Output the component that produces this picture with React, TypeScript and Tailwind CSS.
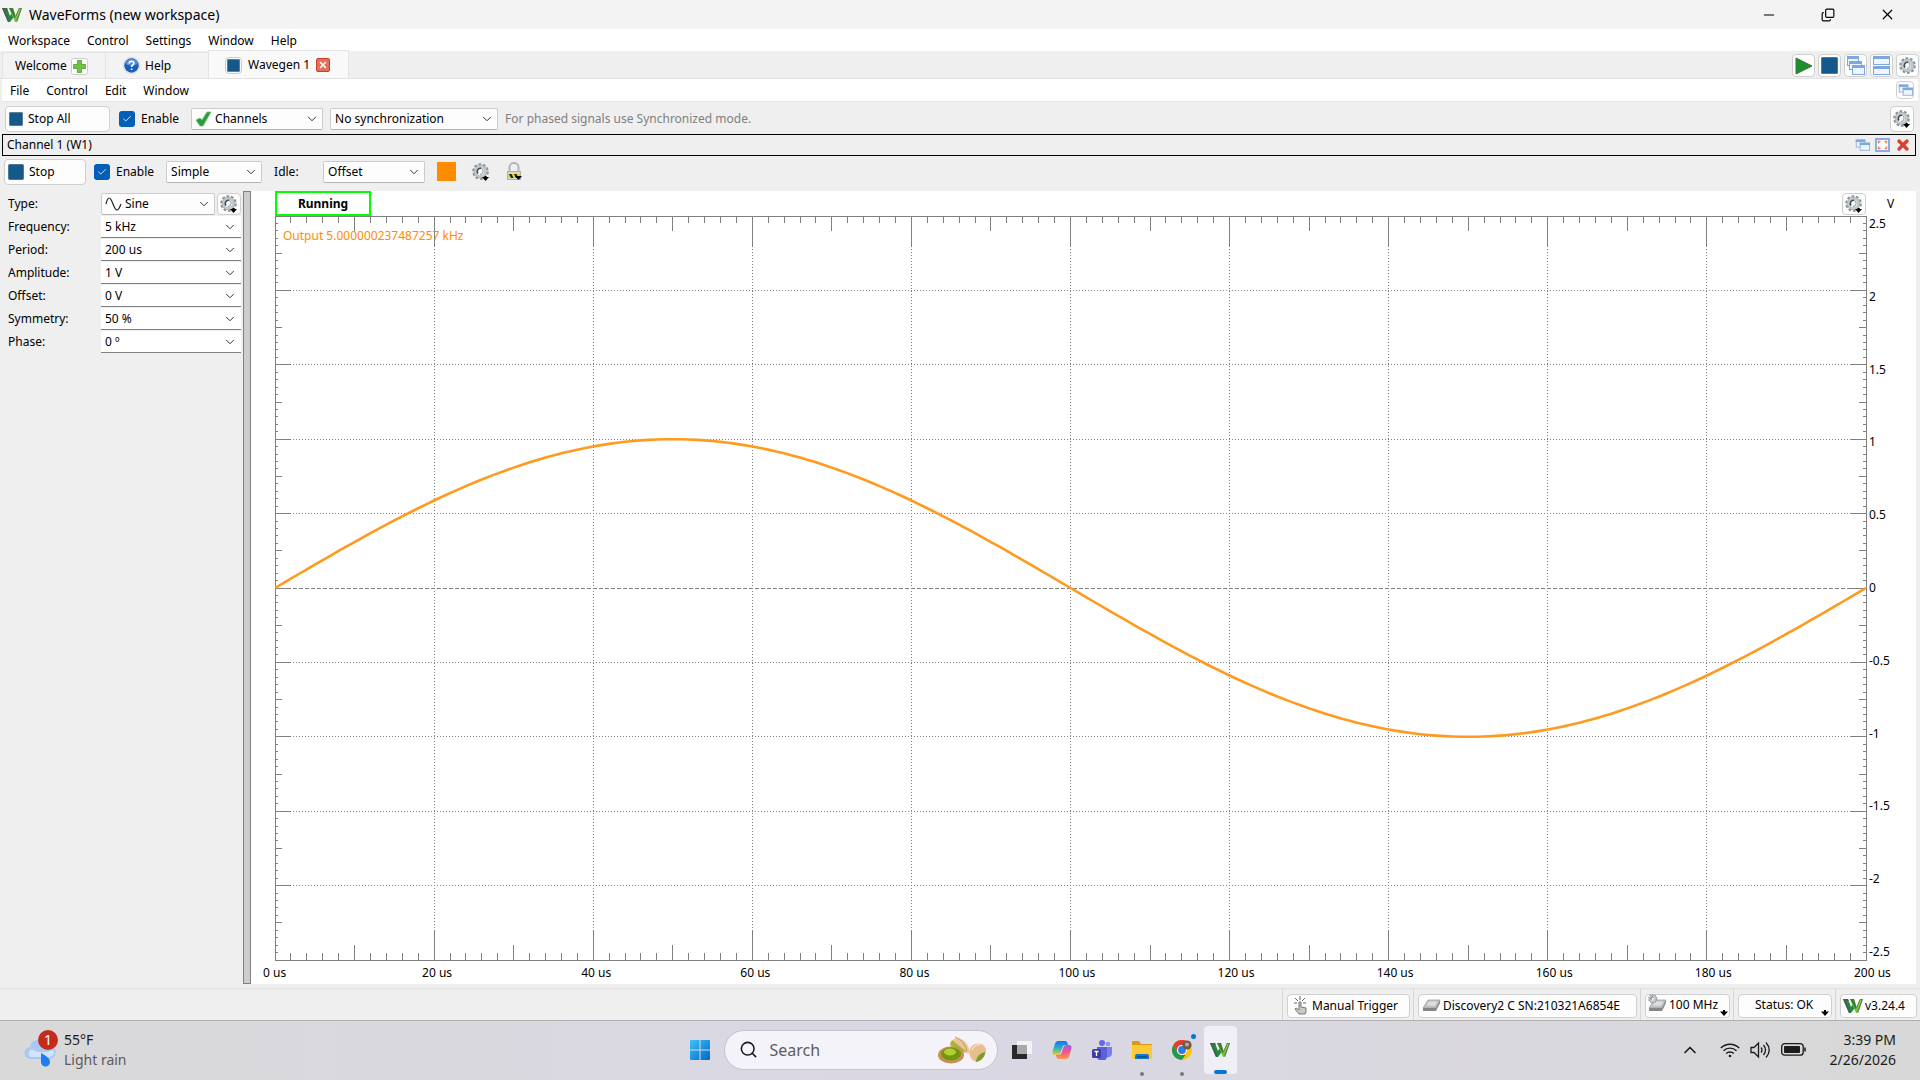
import React from 'react';
import { ChevronDown, ChevronUp, Search, Minus, X, Copy, Check } from 'lucide-react';

const Gear = ({ size = 18, menu = false }: { size?: number; menu?: boolean }) => (
  <svg width={size} height={size} viewBox="0 0 18 18" aria-hidden="true">
    <circle cx="8.5" cy="8.5" r="7" fill="none" stroke="#8b9295" strokeWidth="2.6" strokeDasharray="2.7 1.7" />
    <circle cx="8.5" cy="8.5" r="5" fill="#fafafa" stroke="#c3c8ca" strokeWidth="3" />
    <circle cx="8.5" cy="8.5" r="6.3" fill="none" stroke="#a4abae" strokeWidth="0.7" />
    <path d="M6 10.5A3.2 3.2 0 0 1 9 5.3" fill="none" stroke="#3b4b58" strokeWidth="1.6" />
    <path d="M9 5.3a3.2 3.2 0 0 1-1 6.2" fill="none" stroke="#8a979f" strokeWidth="1" />
    {menu && <path d="M10 14h7l-3.500 4zM12.500 13h2v2h-2z" fill="#000" />}
  </svg>
);

const Logo = () => (
  <svg width="20" height="16" viewBox="0 1 20 18" preserveAspectRatio="none" aria-hidden="true">
    <path d="M0 2h5l3 9 1.500-3 2.500 4-4 6H6z" fill="#1f8a42" />
    <path d="M0 2h5l.8 2.200H2.500L7 16l-1 2z" fill="#4a5b50" />
    <path d="M7 2h4l2.500 9L17 2h3l-5 16h-2z" fill="#7fbf3f" />
    <path d="M7 2h4l2.500 9-.8 3z" fill="#3f7d35" />
    <path d="M13.500 11 17 2h3l-5 16z" fill="#5d7f4e" />
    <path d="M14 12.500 17.500 3h1.200l-4.200 12z" fill="#8fd04a" />
  </svg>
);

const Square = ({ size = 14 }: { size?: number }) => (
  <svg width={size} height={size} viewBox="0 0 16 16" aria-hidden="true">
    <rect x=".5" y=".5" width="15" height="15" rx="1" fill="#14598a" stroke="#4d7896" />
  </svg>
);

const Cascade = ({ size = 19, three = false }: { size?: number; three?: boolean }) => (
  <svg width={size} height={size} viewBox="0 0 19 19" aria-hidden="true">
    <g fill="#eef5fe" stroke="#7da7dd">
      <rect x="1.500" y={three ? 0.5 : 2.5} width="11" height="9" />
      {three && <rect x="3.500" y="5.500" width="12" height="8" />}
      <rect x="6.500" y={three ? 9.5 : 6.5} width="12" height="9" />
    </g>
    <g fill="#7da7dd">
      <rect x="1" y={three ? 0 : 2} width="12" height="3" />
      {three && <rect x="3" y="5" width="13" height="3" />}
      <rect x="6" y={three ? 9 : 6} width="13" height="3" />
    </g>
  </svg>
);

const Tile = () => (
  <svg width="17" height="19" viewBox="0 0 17 19" aria-hidden="true">
    <g fill="#eef5fe" stroke="#7da7dd">
      <rect x=".5" y=".5" width="16" height="8" />
      <rect x=".5" y="10.500" width="16" height="8" />
    </g>
    <path d="M0 0h17v3H0zM0 10h17v3H0z" fill="#7da7dd" />
  </svg>
);

const Caret = () => (
  <svg className="self-end" width="8" height="6" viewBox="0 0 8 6" aria-hidden="true">
    <path d="M3 0h2v1.500h3L4 6 0 1.500h3z" fill="#000" />
  </svg>
);

const Device = () => (
  <svg width="19" height="15" viewBox="0 0 19 15" aria-hidden="true">
    <path d="M6 2h12l-4 8H1z" fill="#c4c4c4" stroke="#999" strokeWidth=".7" />
    <path d="M1 10h13l4-8v3l-4 8H1z" fill="#858585" />
    <path d="M7 3.500h8l-2 4H5z" fill="#dedede" />
  </svg>
);

type BtnProps = { label?: string; className: string; children: React.ReactNode };
const Btn = ({ label, className, children }: BtnProps) => (
  <button
    type="button"
    aria-label={label}
    className={`flex shrink-0 items-center rounded border border-[#cfcfcf] bg-[#fdfdfd] whitespace-nowrap ${className}`}
  >
    {children}
  </button>
);

type DropProps = { label?: string; id?: string; value: string; className: string; pad?: string; flat?: boolean; icon?: React.ReactNode };
const Drop = ({ label, id, value, className, pad = 'pl-1', flat, icon }: DropProps) => (
  <div className={`relative flex h-[22px] items-center ${className}`}>
    <select
      id={id}
      aria-label={label}
      defaultValue={value}
      className={`h-full w-full appearance-none outline-none ${pad} ${
        flat ? 'border-b border-[#808080] bg-white' : 'rounded-xs border border-[#cccccc] border-b-[#b4b4b4] bg-[#fdfdfd]'
      }`}
    >
      <option>{value}</option>
    </select>
    {icon && <span className="pointer-events-none absolute left-1">{icon}</span>}
    <ChevronDown size={14} strokeWidth={1.7} className="pointer-events-none absolute right-1 text-[#333]" />
  </div>
);

const Tick = ({ id }: { id: string }) => (
  <label htmlFor={id} className="flex items-center gap-1.5">
    <span className="relative flex size-4 items-center justify-center">
      <input id={id} type="checkbox" defaultChecked className="size-4 appearance-none rounded-[3px] bg-[#005fb8]" />
      <Check size={10} strokeWidth={2} className="pointer-events-none absolute text-white" />
    </span>
    Enable
  </label>
);

const Menu = ({ items, className }: { items: string[]; className: string }) => (
  <nav className={`flex items-center gap-[17px] bg-white pt-0.5 ${className}`}>
    {items.map((item) => (
      <button type="button" key={item}>{item}</button>
    ))}
  </nav>
);

const Cell = ({ children }: { children: React.ReactNode }) => (
  <div className="flex h-full items-center border-l border-[#d5d5d5] pt-0.5 pr-[3px] pl-1">{children}</div>
);

const FIELDS = [
  ['Frequency', '5 kHz'],
  ['Period', '200 us'],
  ['Amplitude', '1 V'],
  ['Offset', '0 V'],
  ['Symmetry', '50 %'],
  ['Phase', '0 º'],
];
const VOLTS = ['2.5', '2', '1.5', '1', '0.5', '0', '-0.5', '-1', '-1.5', '-2', '-2.5'];
const TIMES = [0, 20, 40, 60, 80, 100, 120, 140, 160, 180, 200];

const wave = Array.from({ length: 201 }, (_, i) => `${i},${(50 - 20 * Math.sin((i / 100) * Math.PI)).toFixed(3)}`).join(' ');

const Plot = () => (
  <svg className="absolute inset-0 h-full w-full overflow-visible" role="img" aria-label="Sine output">
    <g stroke="#808080" strokeWidth="1" fill="none" shapeRendering="crispEdges">
      <rect width="100%" height="100%" />
      {Array.from({ length: 99 }, (_, i) => i + 1).map((i) => {
        const x = `${i}%`;
        const len = i % 10 === 0 ? 30 : i % 5 === 0 ? 15 : 7;
        return (
          <g key={i}>
            {i % 10 === 0 && <line x1={x} x2={x} y1="0" y2="100%" strokeDasharray="1 2" />}
            <line x1={x} x2={x} y1="0" y2={len} />
            <svg y="100%" overflow="visible">
              <line x1={x} x2={x} y1="0" y2={-len} />
            </svg>
          </g>
        );
      })}
      {Array.from({ length: 99 }, (_, i) => i + 1).map((i) => {
        const y = `${i}%`;
        const len = i % 10 === 0 ? 15 : i % 5 === 0 ? 7 : 3;
        return (
          <g key={i}>
            {i % 10 === 0 && <line x1="0" x2="100%" y1={y} y2={y} strokeDasharray={i === 50 ? '4 2' : '1 2'} />}
            <line x1="0" x2={len} y1={y} y2={y} />
            <svg x="100%" overflow="visible">
              <line x1="0" x2={-len} y1={y} y2={y} />
            </svg>
          </g>
        );
      })}
    </g>
    <svg width="100%" height="100%" viewBox="0 0 200 100" preserveAspectRatio="none">
      <polyline points={wave} fill="none" stroke="#ff9a1f" strokeWidth="2.6" vectorEffect="non-scaling-stroke" />
    </svg>
  </svg>
);

const Taskbar = () => (
  <footer className="grid h-[60px] shrink-0 grid-cols-[1fr_auto_1fr] border-t border-[#b0b0b0] bg-linear-to-r from-[#d9d9d9] via-[#dad7e4] to-[#d8d8d8] pb-0.5 text-sm leading-5 text-[#1b1b1b]">
    <button type="button" className="flex items-center gap-2 pl-6 text-left">
      <span className="relative">
        <svg width="32" height="36" viewBox="0 0 32 36" aria-hidden="true">
          <path d="M7 27a6 6 0 0 1-1-12 9 9 0 0 1 17-2 7 7 0 0 1 3 14z" fill="#a9c9f2" />
          <path d="M6 25a5 5 0 0 1 2-8c3 4 16 4 21 1 2 4 0 7-4 7z" fill="#d3e3fa" />
          <path d="M17 21c5 3 9 5 9 9a4.500 4.500 0 0 1-9 0z" fill="#1f7cf2" />
        </svg>
        <span className="absolute -top-0.5 left-3.5 flex size-5 items-center justify-center rounded-full bg-[#c42b1c] text-white">1</span>
      </span>
      <span>
        <span className="block">55°F</span>
        <span className="block text-[#5b5b5b]">Light rain</span>
      </span>
    </button>
    <div className="flex items-center pl-1.5">
      <button type="button" aria-label="Start" className="mr-3.5">
        <svg width="20" height="20" viewBox="0 0 20 20" aria-hidden="true">
          <defs>
            <linearGradient id="win" x1="0" y1="0" x2="1" y2="1"><stop stopColor="#3dc3f7" /><stop offset="1" stopColor="#0067c6" /></linearGradient>
          </defs>
          <path d="M0 1q0-1 1-1h8.500v9.500H0zM10.500 0H19q1 0 1 1v8.500h-9.500zM0 10.500h9.500V20H1q-1 0-1-1zM10.500 10.500H20V19q0 1-1 1h-8.500z" fill="url(#win)" />
        </svg>
      </button>
      <label className="flex h-10 w-[274px] items-center gap-3 rounded-full border border-[#c5c2cf] bg-[#f4f3f9] pr-2.5 pl-3.5">
        <Search size={19} strokeWidth={2} className="shrink-0 text-[#1b1b1b]" />
        <input aria-label="Search" placeholder="Search" className="w-0 flex-1 bg-transparent text-base outline-none placeholder:text-[#5c5c5c]" />
        <svg width="50" height="30" viewBox="0 0 50 30" aria-hidden="true">
          <path d="M13 11C14-1 31 1 33 18c-6 1-14-2-20-7z" fill="#eac698" />
          <path d="M15 5c5 4 10 8 15 12-7-1-14-4-17-8z" fill="#a8b437" />
          <path d="M18 2q9 3 12 14" fill="none" stroke="#c79361" />
          <ellipse cx="14" cy="20" rx="13" ry="8.500" fill="#c88f55" />
          <ellipse cx="14" cy="19" rx="10" ry="6.500" fill="#719711" />
          <ellipse cx="13" cy="17" rx="6" ry="3.500" fill="#b2cf31" />
          <path d="M33 14c4-9 17-6 16 3-1 5-5 9-10 10-5-2-8-7-6-13z" fill="#e7be8d" />
          <path d="M48 17c-5 1-9 5-9 10 5-1 9-5 9-10z" fill="#7d9b27" />
          <path d="M35 15q3-6 8-5" fill="none" stroke="#f6dfbd" strokeWidth="1.500" />
        </svg>
      </label>
      <div className="ml-3.5 flex items-center gap-5">
        <button type="button" aria-label="Task view">
          <svg width="20" height="20" viewBox="0 0 20 20" aria-hidden="true">
            <path d="M0 5h15v14H0z" fill="#292929" />
            <path d="M5 1h15v13H5z" fill="#f3f3f3" />
            <path d="M5 5h10v9H5z" fill="#a9a9a9" />
          </svg>
        </button>
        <button type="button" aria-label="Copilot">
          <svg width="20" height="20" viewBox="0 0 20 20" aria-hidden="true">
            <defs>
              <linearGradient id="cpA" x1="0" y1="0" x2="0" y2="1"><stop stopColor="#1f6fe0" /><stop offset=".5" stopColor="#27b4c8" /><stop offset="1" stopColor="#f2c82f" /></linearGradient>
              <linearGradient id="cpB" x1="0" y1="0" x2="0" y2="1"><stop stopColor="#a45be8" /><stop offset=".5" stopColor="#f0568c" /><stop offset="1" stopColor="#fb9a4b" /></linearGradient>
            </defs>
            <path d="M6 1h7q2 0 2.500 2l.5 2h-3q-2 0-2.500 2l-2 6q-.5 2-3 2H3q-3 0-2.500-3.500L3 3.500Q4 1 6 1z" fill="url(#cpA)" />
            <path d="M14 19H7q-2 0-2.500-2L4 15h3q2 0 2.500-2l2-6q.5-2 3-2H17q3 0 2.500 3.500L17 16.500Q16 19 14 19z" fill="url(#cpB)" />
          </svg>
        </button>
        <button type="button" aria-label="Teams">
          <svg width="20" height="20" viewBox="0 0 20 20" aria-hidden="true">
            <circle cx="10" cy="3" r="3" fill="#6269e2" />
            <circle cx="16" cy="4" r="2.300" fill="#8f93f0" />
            <path d="M13 7h7v7a4 4 0 0 1-7 2z" fill="#7a7fee" />
            <path d="M5 7h10v8a5 5 0 0 1-10 2z" fill="#5b5fd9" />
            <rect x="0" y="9" width="9" height="9" rx="1.500" fill="#3b3dad" />
            <path d="M2.500 11.500h4M4.500 11.500v4.500" stroke="#fff" strokeWidth="1.300" />
          </svg>
        </button>
        <button type="button" aria-label="File Explorer" className="relative">
          <svg width="20" height="20" viewBox="0 0 20 20" aria-hidden="true">
            <path d="M0 2q0-1 1-1h6l2 3h10q1 0 1 1v4H0z" fill="#dd9a0c" />
            <path d="M0 5h20v13q0 1-1 1H1q-1 0-1-1z" fill="#fdc939" />
            <path d="M3 19v-3q0-2 2-2h10q2 0 2 2v3z" fill="#1277cf" />
            <path d="M5 16h10v1.500H5z" fill="#0b4f96" />
          </svg>
          <span className="absolute -bottom-4 left-2 size-1 rounded-full bg-[#7a7a7a]" />
        </button>
        <button type="button" aria-label="Chrome" className="relative">
          <svg width="20" height="20" viewBox="0 0 20 20" aria-hidden="true">
            <circle cx="10" cy="10" r="10" fill="#fbc116" />
            <path d="M1.300 5A10 10 0 0 1 18.700 5H10a5 5 0 0 0-4.500 7.300z" fill="#e33b2e" />
            <path d="M1.300 5l4.300 7.500A5 5 0 0 0 10 15h3.500L9.800 20A10 10 0 0 1 1.300 5z" fill="#229a4b" />
            <circle cx="10" cy="10" r="5" fill="#fff" />
            <circle cx="10" cy="10" r="3.900" fill="#2a7de9" />
            <circle cx="15" cy="5" r="4.600" fill="#6e5a54" />
            <circle cx="15" cy="4.500" r="2" fill="#d0a58e" />
          </svg>
          <span className="absolute -top-1.5 -right-1 size-[5px] rounded-full bg-[#0078d4]" />
          <span className="absolute -bottom-4 left-2 size-1 rounded-full bg-[#7a7a7a]" />
        </button>
      </div>
      <button type="button" aria-label="WaveForms" className="relative ml-3 flex h-12 w-[33px] items-center justify-center rounded bg-[#f0eff5]">
        <Logo />
        <span className="absolute bottom-0 h-1 w-[13px] rounded-full bg-[#0078d4]" />
      </button>
    </div>
    <div className="flex items-center justify-end pr-6">
      <ChevronUp size={20} strokeWidth={2} className="mr-5" />
      <svg width="20" height="16" viewBox="0 0 20 16" aria-hidden="true" fill="none" stroke="#1b1b1b" strokeWidth="1.400">
        <path d="M.8 6a13 13 0 0 1 18.400 0M3.500 8.800a9.200 9.200 0 0 1 13 0M6.200 11.500a5.400 5.400 0 0 1 7.600 0" />
        <circle cx="10" cy="14" r="1.300" fill="#1b1b1b" stroke="none" />
      </svg>
      <svg className="ml-2.5" width="21" height="18" viewBox="0 0 21 18" aria-hidden="true" fill="none" stroke="#1b1b1b" strokeWidth="1.300">
        <path d="M1 6.500h3L8.500 2v14L4 11.500H1zM11 6.500q2 2.500 0 5M13.500 4q4 5 0 10M16 1.500q6.500 7.500 0 15" />
      </svg>
      <svg className="ml-2.5" width="25" height="13" viewBox="0 0 25 13" aria-hidden="true">
        <rect x=".7" y=".7" width="21.500" height="11.500" rx="3" fill="none" stroke="#1b1b1b" strokeWidth="1.300" />
        <rect x="3" y="3" width="16" height="7" rx="1" fill="#1b1b1b" />
        <path d="M24 4.500v4" stroke="#1b1b1b" strokeWidth="1.500" />
      </svg>
      <div className="ml-6 text-right">
        <div>3:39 PM</div>
        <div>2/26/2026</div>
      </div>
    </div>
  </footer>
);

export default function App() {
  return (
    <div className="flex h-screen flex-col overflow-hidden bg-[#efefef] font-['Noto_Sans',sans-serif] text-xs text-black">
      <header className="flex h-[29px] shrink-0 items-center bg-[#f3f3f3] pl-0.5 text-sm">
        <Logo />
        <h1 className="ml-[7px] flex-1">WaveForms (new workspace)</h1>
        <div className="flex gap-11 pr-6">
          <button type="button" aria-label="Minimize"><Minus size={16} strokeWidth={1.7} /></button>
          <button type="button" aria-label="Restore"><Copy size={14} strokeWidth={2} className="-scale-x-100 rotate-180" /></button>
          <button type="button" aria-label="Close"><X size={17} strokeWidth={1.7} /></button>
        </div>
      </header>
      <Menu items={['Workspace', 'Control', 'Settings', 'Window', 'Help']} className="h-[22px] shrink-0 pl-2" />

      {/* Instrument tabs */}
      <div className="flex h-7 shrink-0 items-end border-b border-[#e3e3e3] pr-px pl-0.5">
        <button type="button" className="flex h-[26px] w-[104px] items-center gap-1 border border-b-0 border-[#e3e3e3] bg-[#f3f3f3] pt-px pl-3">
          Welcome
          <svg width="17" height="17" viewBox="0 0 17 17" aria-hidden="true">
            <rect x=".5" y=".5" width="16" height="16" rx="2" fill="#fff" stroke="#ccc" />
            <path d="M6.500 2.500h4v4h4v4h-4v4h-4v-4h-4v-4h4z" fill="#74c043" stroke="#4d9a2c" strokeWidth=".8" />
          </svg>
        </button>
        <button type="button" className="flex h-[26px] w-[102px] items-center gap-1 border-t border-[#e3e3e3] bg-[#f3f3f3] pl-4">
          <svg width="19" height="19" viewBox="0 0 19 19" aria-hidden="true">
            <circle cx="9.500" cy="9.500" r="9" fill="#dfe3e8" />
            <circle cx="9.500" cy="9.500" r="7.200" fill="#1c5fba" />
            <path d="M3.500 8a6 5 0 0 1 12 0q-6 3-12 0z" fill="#5793da" />
            <path d="M7.200 7.500q0-2.300 2.300-2.300t2.300 2q0 1.300-1.300 2-.9.500-.9 1.800M9.600 12.500v1.500" fill="none" stroke="#fff" strokeWidth="1.600" />
          </svg>
          Help
        </button>
        <button type="button" className="flex h-7 w-[141px] items-center gap-1.5 border border-b-0 border-[#e3e3e3] bg-[#f9f9f9] pt-px pl-4">
          <span className="flex size-[17px] items-center justify-center rounded-sm border border-[#ccc]"><Square size={13} /></span>
          Wavegen 1
          <span className="flex size-3.5 items-center justify-center rounded-xs border border-[#cf3d28] bg-[#e0705a] text-white"><X size={10} strokeWidth={4} /></span>
        </button>
        <div className="mb-px ml-auto flex gap-[3px]">
          <Btn label="Run" className="size-[23px] justify-center">
            <svg width="18" height="18" viewBox="0 0 18 18" aria-hidden="true"><path d="M1 1l16 8-16 8z" fill="#1c8f2f" stroke="#3e6f49" /></svg>
          </Btn>
          <Btn label="Stop instruments" className="size-[23px] justify-center"><Square size={17} /></Btn>
          <Btn label="Cascade" className="size-[23px] justify-center"><Cascade three /></Btn>
          <Btn label="Tile" className="size-[23px] justify-center"><Tile /></Btn>
          <Btn label="Options" className="size-[23px] justify-center"><Gear /></Btn>
        </div>
      </div>

      <main className="mx-0.5 flex min-h-0 flex-1 flex-col">
        <div className="flex h-[23px] shrink-0 items-center justify-between border-b border-[#e6e6e6] bg-white pr-1">
          <Menu items={['File', 'Control', 'Edit', 'Window']} className="pl-2" />
          <Btn label="Undock" className="size-[18px] justify-center"><Cascade size={15} /></Btn>
        </div>
        <div className="flex h-8 shrink-0 items-center pt-px pr-1 pl-[3px]">
          <Btn className="h-[26px] w-[105px] gap-[5px] pl-[3px]"><Square />Stop All</Btn>
          <div className="ml-[9px]"><Tick id="enable-all" /></div>
          <Drop label="Channels" value="Channels" className="ml-3 w-[132px]" pad="pl-[23px]" icon={
            <svg width="17" height="16" viewBox="0 0 17 16" aria-hidden="true"><path d="M1 9l4-2 2 2 5-8h4L8 15H5z" fill="#2e9a41" stroke="#6dbf72" strokeWidth=".8" /></svg>
          } />
          <Drop label="Synchronization" value="No synchronization" className="ml-[7px] w-[168px]" />
          <span className="ml-[7px] flex-1 text-[#808080]">For phased signals use Synchronized mode.</span>
          <Btn label="Settings" className="h-[26px] w-6 justify-center"><Gear menu /></Btn>
        </div>

        {/* Channel header */}
        <div className="mr-0.5 flex h-[22px] shrink-0 items-center gap-[5px] border border-black pr-1 pl-1">
          <h2 className="flex-1">Channel 1 (W1)</h2>
          <button type="button" aria-label="Float"><Cascade size={15} /></button>
          <button type="button" aria-label="Maximize">
            <svg width="15" height="14" viewBox="0 0 15 14" aria-hidden="true">
              <rect x="1" y="1" width="13" height="12" fill="#fff" stroke="#6f9be0" strokeWidth="1.600" />
              <path d="M3.500 5.500v-2h2M9.500 3.500h2v2M11.500 8.500v2h-2M5.500 10.500h-2v-2" fill="none" stroke="#ef7a52" strokeWidth="1.400" />
            </svg>
          </button>
          <button type="button" aria-label="Close channel"><X size={16} strokeWidth={5} className="text-[#d8402f]" /></button>
        </div>
        <div className="flex h-[35px] shrink-0 items-center pb-1 pl-0.5">
          <Btn className="h-[26px] w-[82px] gap-[5px] pl-[3px]"><Square size={16} />Stop</Btn>
          <div className="ml-2"><Tick id="enable-channel" /></div>
          <Drop label="Mode" value="Simple" className="ml-3 w-24" />
          <label htmlFor="idle" className="ml-3 w-[49px]">Idle:</label>
          <Drop id="idle" value="Offset" className="w-[102px]" />
          <button type="button" aria-label="Color" className="ml-3 size-[19px] bg-[#ff8c00]" />
          <button type="button" aria-label="Channel options" className="ml-4"><Gear menu /></button>
          <button type="button" aria-label="Lock" className="ml-4">
            <svg width="17" height="19" viewBox="0 0 17 19" aria-hidden="true">
              <path d="M3.500 10V5.500a4 4 0 0 1 9 0V10" fill="none" stroke="#b8b8b8" strokeWidth="2.200" />
              <rect x="1.500" y="9.500" width="13" height="8" fill="#d6d6d6" stroke="#b0b0b0" />
              <path d="M2 12h12v4H2z" fill="#e8d623" />
              <path d="M3 12h2.500l2 4H5zM8 12h2.500l2 4H10z" fill="#222" />
              <path d="M9 14h7l-3.500 4z" fill="#000" />
            </svg>
          </button>
        </div>

        <div className="mr-0.5 flex min-h-0 flex-1">
          <aside className="flex w-[241px] shrink-0 flex-col gap-px pt-0.5 pr-0.5 pl-1.5">
            <div className="flex items-center">
              <label htmlFor="type" className="w-[93px]">Type:</label>
              <Drop id="type" value="Sine" className="w-[114px]" pad="pl-[23px]" icon={
                <svg width="17" height="16" viewBox="0 0 17 16" aria-hidden="true"><path d="M1 8C3 0 5 0 8 8s5 8 8 0" fill="none" stroke="#222" strokeWidth="1.200" /></svg>
              } />
              <Btn label="Type options" className="ml-auto h-[22px] w-6 justify-center"><Gear menu /></Btn>
            </div>
            {FIELDS.map(([name, value]) => (
              <div key={name} className="flex items-center">
                <label htmlFor={name} className="w-[93px] shrink-0">{name}:</label>
                <Drop flat id={name} value={value} className="flex-1" />
              </div>
            ))}
          </aside>
          <div className="w-2 shrink-0 border border-[#808080] bg-[#cdcdcd]" />
          <section className="flex min-w-0 flex-1 flex-col bg-white pl-6">
            <div className="flex h-[25px] shrink-0">
              <div className="flex h-[25px] w-24 items-center justify-center border-2 border-[#00ff00] font-bold">Running</div>
              <Btn label="Plot options" className="mt-0.5 ml-auto h-[22px] w-6 justify-center"><Gear menu /></Btn>
              <span className="flex w-[50px] items-center pl-[21px]">V</span>
            </div>
            <div className="flex min-h-0 flex-1">
              <div className="relative flex-1">
                <Plot />
                <span className="absolute top-3 left-2 leading-4 text-[#ff8c00]">Output 5.000000237487257 kHz</span>
              </div>
              <div className="flex w-[50px] flex-col justify-between pl-[3px] leading-4">
                {VOLTS.map((v) => <span key={v}>{v}</span>)}
              </div>
            </div>
            <div className="-ml-3 flex h-6 shrink-0 items-center pt-0.5 pr-[62px]">
              {TIMES.map((t) => (
                <span key={t} className={t === 200 ? 'w-0 whitespace-nowrap' : 'w-0 flex-1 whitespace-nowrap'}>{t} us</span>
              ))}
            </div>
          </section>
        </div>
      </main>

      {/* Status bar */}
      <div className="mt-1 flex h-8 shrink-0 items-center justify-end border-t border-[#e0e0e0]">
        <Cell>
          <Btn className="h-6 w-[123px] gap-1 pl-1.5">
            <svg width="14" height="19" viewBox="0 0 14 19" aria-hidden="true">
              <path d="M5 18l-4-5 1-1 3 2V6h2v5l5 1v4l-1 2z" fill="#c9c9c9" stroke="#777" />
              <path d="M6 0v4M1 2l3 3M11 2L8 5M0 7h3M12 7H9" stroke="#666" />
            </svg>
            Manual Trigger
          </Btn>
        </Cell>
        <Cell>
          <Btn className="h-6 w-[219px] gap-0.5 pl-[3px]"><Device />Discovery2 C SN:210321A6854E</Btn>
        </Cell>
        <Cell>
          <Btn className="h-6 w-[85px] gap-0.5 pb-px pl-0.5">
            <span className="relative"><Device /><span className="absolute -top-1 left-0"><Gear size={10} /></span></span>
            100 MHz<Caret />
          </Btn>
        </Cell>
        <Cell>
          <Btn className="h-6 w-[94px] gap-2 pb-px pl-4">Status: OK<Caret /></Btn>
        </Cell>
        <Cell>
          <Btn className="h-6 w-[77px] gap-0.5 pl-0.5"><Logo />v3.24.4</Btn>
        </Cell>
      </div>
      <Taskbar />
    </div>
  );
}
